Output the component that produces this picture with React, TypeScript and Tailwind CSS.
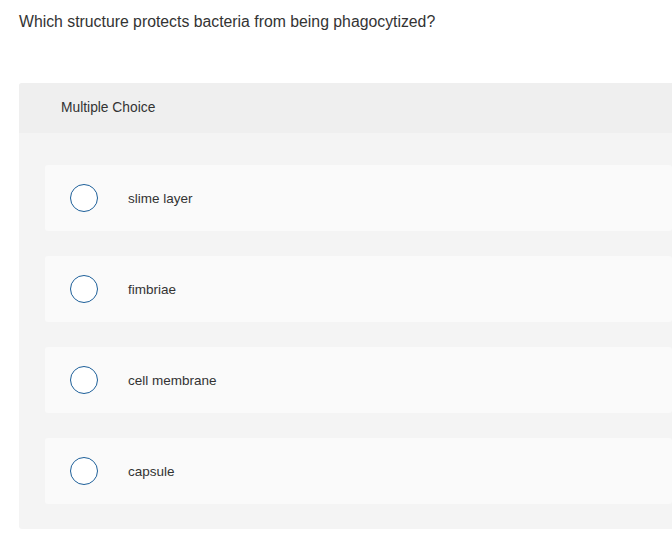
const OPTIONS = ['slime layer', 'fimbriae', 'cell membrane', 'capsule']

function Option({ label }: { label: string }) {
  return (
    <label className="flex h-[66px] items-center rounded-[3px] bg-[#fafafa] pl-[25px]">
      <span className="h-[28px] w-[28px] shrink-0 rounded-full border-[1.5px] border-[#1d5f99] bg-white" />
      <span className="ml-[30px] mt-[2px] text-[13.5px] text-[#333]">{label}</span>
    </label>
  )
}

export default function App() {
  return (
    <div className="min-h-[544px] bg-white font-['Liberation_Sans',sans-serif] text-[#333]">
      <p className="pl-[19px] pt-[11px] text-[15.8px] leading-[21px]">
        Which structure protects bacteria from being phagocytized?
      </p>

      {/* Question panel */}
      <div className="ml-[19px] mt-[51px] rounded-l-[3px] bg-[#f4f4f4]">
        <div className="flex h-[50px] items-center rounded-tl-[3px] bg-[#efefef] pl-[42px] pt-[1px] text-[13.8px]">
          Multiple Choice
        </div>
        <div className="flex flex-col gap-[25px] pb-[25px] pl-[26px] pt-[32px]">
          {OPTIONS.map((o) => (
            <Option key={o} label={o} />
          ))}
        </div>
      </div>
    </div>
  )
}
